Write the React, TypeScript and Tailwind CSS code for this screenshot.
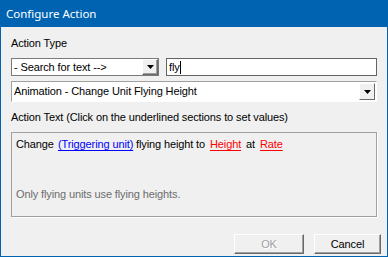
import React from 'react';

function Arrow() {
  return (
    <svg width="7" height="4" viewBox="0 0 7 4">
      <path d="M0 0h7L3.5 4z" fill="#000" />
    </svg>
  );
}

export default function App() {
  return (
    <div
      className="w-[388px] h-[257px] flex flex-col bg-[#0063b1] px-px pb-px overflow-hidden"
      style={{ fontFamily: '"Liberation Sans", Arial, sans-serif' }}
    >
      {/* Title bar */}
      <div className="h-[27px] flex items-center pl-[5px] text-white text-[11.5px] font-['Noto_Sans',sans-serif]">
        Configure Action
      </div>

      {/* Client area */}
      <div className="flex-1 flex flex-col bg-[#f0f0f0] px-[10px] text-[11px] leading-[13px] tracking-[-0.12px] text-black">
        <div className="mt-[10px]">Action Type</div>

        <div className="mt-[8px] flex gap-[7px] h-[18px]">
          <div className="w-[148px] flex bg-white border border-[#7a7a7a]">
            <div className="flex-1 pl-[2px] flex items-center">- Search for text --&gt;</div>
            <div className="w-[16px] flex items-center justify-center bg-[#f0f0f0] border-t border-l border-t-white border-l-white border-b border-r border-b-[#696969] border-r-[#696969] shadow-[inset_-1px_-1px_0_#a0a0a0]">
              <Arrow />
            </div>
          </div>
          <div className="flex-1 flex items-center bg-white border border-[#646464] pl-[2px]">
            fly<span className="w-px h-[13px] bg-black" />
          </div>
        </div>

        <div className="mt-[5px] flex h-[21px] bg-white border-t border-l border-[#a0a0a0] border-b border-r border-b-white border-r-white">
          <div className="flex-1 pl-[2px] flex items-center">Animation - Change Unit Flying Height</div>
          <div className="w-[18px] flex p-px">
            <div className="flex-1 flex items-center justify-center bg-[#f0f0f0] border-t border-l border-t-white border-l-white border-b border-r border-b-[#696969] border-r-[#696969]">
              <Arrow />
            </div>
          </div>
        </div>

        <div className="mt-[9px]">Action Text (Click on the underlined sections to set values)</div>

        <div className="mt-[8px] h-[85px] border border-[#a0a0a0] shadow-[1px_1px_0_#fff] flex flex-col px-[4px] pt-[5px]">
          <div className="flex whitespace-nowrap">
            <span className="w-[42px]">Change</span>
            <span className="w-[78px]">
              <span className="text-[#0000ff] underline underline-offset-2">(Triggering unit)</span>
            </span>
            <span className="w-[74px]">flying height to</span>
            <span className="w-[36px]">
              <span className="text-[#ff0000] underline underline-offset-2">Height</span>
            </span>
            <span className="w-[14px]">at</span>
            <span className="text-[#ff0000] underline underline-offset-2">Rate</span>
          </div>
          <div className="mt-[37px] text-[#6d6d6d]">Only flying units use flying heights.</div>
        </div>

        <div className="mt-[17px] flex justify-end gap-[10px] -mr-[4px]">
          <div className="w-[70px] h-[20px] flex items-center justify-center bg-[#f0f0f0] border-t border-l border-t-white border-l-white border-b border-r border-b-[#696969] border-r-[#696969] shadow-[inset_-1px_-1px_0_#a0a0a0] text-[#a0a0a0] [text-shadow:1px_1px_0_#fff]">
            OK
          </div>
          <div className="w-[67px] h-[20px] flex items-center justify-center bg-[#f0f0f0] border-t border-l border-t-white border-l-white border-b border-r border-b-[#696969] border-r-[#696969] shadow-[inset_-1px_-1px_0_#a0a0a0]">
            Cancel
          </div>
        </div>
      </div>
    </div>
  );
}
